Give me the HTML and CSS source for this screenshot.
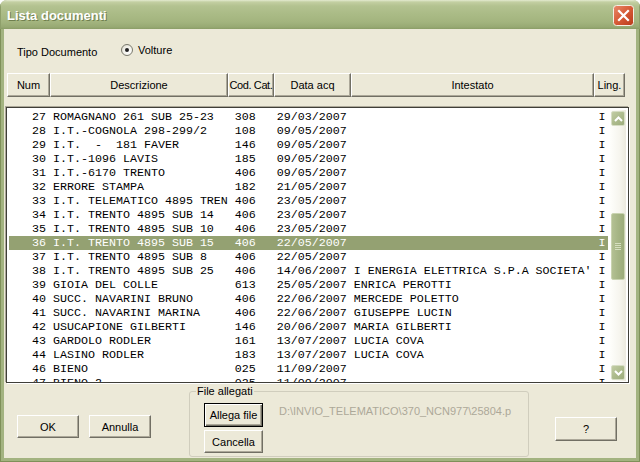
FILE: index.html
```html
<!DOCTYPE html>
<html lang="it">
<head>
<meta charset="utf-8">
<title>Lista documenti</title>
<link rel="stylesheet" href="styles.css">
</head>
<body>
<div class="window">
  <div class="titlebar">
    <span class="title">Lista documenti</span>
    <span class="close-btn">
      <svg width="21" height="21" viewBox="0 0 21 21">
        <defs>
          <linearGradient id="cg" x1="0" y1="0" x2="1" y2="1">
            <stop offset="0" stop-color="#e98a6c"/>
            <stop offset="0.5" stop-color="#d65a36"/>
            <stop offset="1" stop-color="#b9391a"/>
          </linearGradient>
        </defs>
        <rect x="0.5" y="0.5" width="20" height="20" rx="3" fill="url(#cg)" stroke="#f4f0e6"/>
        <path d="M6 6 L15 15 M15 6 L6 15" stroke="#fff" stroke-width="2.2" stroke-linecap="square" fill="none"/>
      </svg>
    </span>
  </div>
  <div class="frame">
    <div class="client">
      <div class="tipo-row">
        <span class="tipo-label">Tipo Documento</span>
        <span class="radio"><span class="radio-circle"><span class="radio-dot"></span></span><span class="radio-text">Volture</span></span>
      </div>

      <div class="header">
        <div class="hcell w-num">Num</div>
        <div class="hcell w-desc">Descrizione</div>
        <div class="hcell w-cod">Cod. Cat.</div>
        <div class="hcell w-date">Data acq</div>
        <div class="hcell w-int">Intestato</div>
        <div class="hcell w-ling">Ling.</div>
      </div>

      <div class="listbox">
        <div class="rows">
          <div class="row"><span>27</span><span>ROMAGNANO 261 SUB 25-23</span><span>308</span><span>29/03/2007</span><span></span><span>I</span></div>
          <div class="row"><span>28</span><span>I.T.-COGNOLA 298-299/2</span><span>108</span><span>09/05/2007</span><span></span><span>I</span></div>
          <div class="row"><span>29</span><span>I.T.  -  181 FAVER</span><span>146</span><span>09/05/2007</span><span></span><span>I</span></div>
          <div class="row"><span>30</span><span>I.T.-1096 LAVIS</span><span>185</span><span>09/05/2007</span><span></span><span>I</span></div>
          <div class="row"><span>31</span><span>I.T.-6170 TRENTO</span><span>406</span><span>09/05/2007</span><span></span><span>I</span></div>
          <div class="row"><span>32</span><span>ERRORE STAMPA</span><span>182</span><span>21/05/2007</span><span></span><span>I</span></div>
          <div class="row"><span>33</span><span>I.T. TELEMATICO 4895 TREN</span><span>406</span><span>23/05/2007</span><span></span><span>I</span></div>
          <div class="row"><span>34</span><span>I.T. TRENTO 4895 SUB 14</span><span>406</span><span>23/05/2007</span><span></span><span>I</span></div>
          <div class="row"><span>35</span><span>I.T. TRENTO 4895 SUB 10</span><span>406</span><span>23/05/2007</span><span></span><span>I</span></div>
          <div class="row sel"><span>36</span><span>I.T. TRENTO 4895 SUB 15</span><span>406</span><span>22/05/2007</span><span></span><span>I</span></div>
          <div class="row"><span>37</span><span>I.T. TRENTO 4895 SUB 8</span><span>406</span><span>22/05/2007</span><span></span><span>I</span></div>
          <div class="row"><span>38</span><span>I.T. TRENTO 4895 SUB 25</span><span>406</span><span>14/06/2007</span><span>I ENERGIA ELETTRICA S.P.A SOCIETA'</span><span>I</span></div>
          <div class="row"><span>39</span><span>GIOIA DEL COLLE</span><span>613</span><span>25/05/2007</span><span>ENRICA PEROTTI</span><span>I</span></div>
          <div class="row"><span>40</span><span>SUCC. NAVARINI BRUNO</span><span>406</span><span>22/06/2007</span><span>MERCEDE POLETTO</span><span>I</span></div>
          <div class="row"><span>41</span><span>SUCC. NAVARINI MARINA</span><span>406</span><span>22/06/2007</span><span>GIUSEPPE LUCIN</span><span>I</span></div>
          <div class="row"><span>42</span><span>USUCAPIONE GILBERTI</span><span>146</span><span>20/06/2007</span><span>MARIA GILBERTI</span><span>I</span></div>
          <div class="row"><span>43</span><span>GARDOLO RODLER</span><span>161</span><span>13/07/2007</span><span>LUCIA COVA</span><span>I</span></div>
          <div class="row"><span>44</span><span>LASINO RODLER</span><span>183</span><span>13/07/2007</span><span>LUCIA COVA</span><span>I</span></div>
          <div class="row"><span>46</span><span>BIENO</span><span>025</span><span>11/09/2007</span><span></span><span>I</span></div>
          <div class="row"><span>47</span><span>BIENO 2</span><span>025</span><span>11/09/2007</span><span></span><span>I</span></div>
        </div>
        <div class="vscroll">
          <div class="sbtn">
            <div class="sbtn-face">
              <svg width="9" height="6" viewBox="0 0 9 6"><path d="M1 5 L4.5 1.5 L8 5" stroke="#fff" stroke-width="2" fill="none"/></svg>
            </div>
          </div>
          <div class="track">
            <div class="thumb">
              <div class="grip"></div><div class="grip"></div><div class="grip"></div><div class="grip"></div>
            </div>
          </div>
          <div class="sbtn">
            <div class="sbtn-face">
              <svg width="9" height="6" viewBox="0 0 9 6"><path d="M1 1 L4.5 4.5 L8 1" stroke="#fff" stroke-width="2" fill="none"/></svg>
            </div>
          </div>
        </div>
      </div>

      <div class="bottom">
        <button class="btn btn-ok">OK</button>
        <button class="btn btn-annulla">Annulla</button>
        <fieldset class="files">
          <legend>File allegati</legend>
          <div class="files-body">
            <div class="files-buttons">
              <button class="btn btn-default btn-allega">Allega file</button>
              <button class="btn btn-cancella">Cancella</button>
            </div>
            <div class="path">D:\INVIO_TELEMATICO\370_NCN977\25804.p</div>
          </div>
        </fieldset>
        <button class="btn btn-help">?</button>
      </div>
    </div>
  </div>
</div>
</body>
</html>
```

FILE: styles.css
```css
* { box-sizing: border-box; }

html, body {
  margin: 0;
  padding: 0;
}

body {
  width: 640px;
  height: 462px;
  overflow: hidden;
  background: #ffffff;
  font-family: "Liberation Sans", Arial, sans-serif;
  font-size: 11px;
  color: #000;
}

.window {
  width: 640px;
  height: 462px;
  display: flex;
  flex-direction: column;
  border-radius: 7px 7px 0 0;
  overflow: hidden;
  background: #a1b17e;
}

.titlebar {
  height: 29px;
  flex: none;
  display: flex;
  align-items: center;
  justify-content: space-between;
  padding: 0 6px 0 7px;
  background: linear-gradient(to bottom,
    #e4ead0 0px, #c3cfa2 2px, #b3c290 6px, #aabb86 14px,
    #a3b47e 22px, #97a973 27px, #8a9c66 29px);
  box-shadow: inset 1px 0 #8e9f6a, inset -1px 0 #8e9f6a;
}

.title {
  font-weight: bold;
  font-size: 13px;
  color: #fff;
  text-shadow: 1px 1px 0 #6f7f4e;
  letter-spacing: 0;
  margin-top: 1px;
}

.close-btn {
  display: flex;
  width: 21px;
  height: 21px;
  margin-top: 1px;
}

.frame {
  flex: 1;
  padding: 0 4px 4px;
  background: #a3b380;
  box-shadow: inset 1px 0 #7f9059, inset -1px 0 #7f9059, inset 0 -1px #7f9059;
}

.client {
  height: 100%;
  background: #ece9d8;
  display: flex;
  flex-direction: column;
}

/* Tipo documento row */
.tipo-row {
  margin-top: 14px;
  height: 16px;
  padding-left: 13px;
  display: flex;
  align-items: flex-start;
}

.tipo-label {
  width: 104px;
  line-height: 16px;
  margin-top: 1px;
}

.radio {
  display: flex;
  align-items: center;
  height: 16px;
  margin-top: -1px;
}

.radio-circle {
  width: 12px;
  height: 12px;
  border-radius: 50%;
  border: 1px solid #7a7a6e;
  background: radial-gradient(circle at 65% 65%, #ffffff 0, #f2f1ea 50%, #d6d3c4 100%);
  display: flex;
  align-items: center;
  justify-content: center;
}

.radio-dot {
  width: 4px;
  height: 4px;
  border-radius: 50%;
  background: #222;
}

.radio-text {
  margin-left: 5px;
  line-height: 16px;
}

/* Column header */
.header {
  margin: 14px 0 0 3px;
  height: 24px;
  display: flex;
}

.hcell {
  height: 24px;
  display: flex;
  align-items: center;
  justify-content: center;
  white-space: nowrap;
  overflow: hidden;
  background: #ece9d8;
  border: 1px solid;
  border-color: #ffffff #716f64 #716f64 #ffffff;
  box-shadow: inset -1px -1px 0 #aca899;
}

.w-num { width: 43px; }
.w-desc { width: 178px; }
.w-cod { width: 46px; letter-spacing: -0.4px; }
.w-date { width: 77px; }
.w-int { width: 243px; }
.w-ling { width: 31px; }

/* List */
.listbox {
  margin: 10px 0 0 2px;
  width: 623px;
  height: 276px;
  display: flex;
  align-items: flex-start;
  padding: 2px 2px 0 2px;
  background: #ffffff;
  border: 1px solid #3f3e38;
  box-shadow: -1px -1px 0 #aca899, 1px 1px 0 #ffffff;
}

.rows {
  width: 599px;
  height: 272px;
  overflow: hidden;
  font-family: "Liberation Mono", "Courier New", monospace;
  font-size: 11.667px;
  color: #000;
}

.row {
  display: grid;
  grid-template-columns: 3ch 26ch 6ch 11ch 35ch 1ch;
  height: 14px;
  line-height: 14px;
  padding-left: 23px;
  white-space: pre;
}

.row.sel {
  background: #94a172;
  color: #ffffff;
}

/* Scrollbar */
.vscroll {
  width: 16px;
  height: 271px;
  margin-left: 2px;
  display: flex;
  flex-direction: column;
  background: linear-gradient(to right, #fefefb 0, #f6f5ee 60%, #ebe9de 100%);
}

.sbtn {
  height: 17px;
  padding: 1px;
  flex: none;
}

.sbtn-face {
  height: 15px;
  border: 1px solid #d6ddc4;
  border-radius: 2px;
  background: linear-gradient(135deg, #c2cda4 0, #adbb8d 50%, #9dac7c 100%);
  display: flex;
  align-items: center;
  justify-content: center;
}

.track {
  flex: 1;
  padding: 0 1px;
}

.thumb {
  margin-top: 86px;
  height: 67px;
  border: 1px solid #c9d3b0;
  border-radius: 2px;
  background: linear-gradient(to right, #b3c093 0, #a6b585 50%, #9cab7a 100%);
  display: flex;
  flex-direction: column;
  align-items: center;
  justify-content: center;
  gap: 1px;
}

.grip {
  width: 6px;
  height: 1px;
  background: #d6dfc0;
}

/* Bottom area */
.bottom {
  height: 75px;
  display: flex;
  align-items: flex-start;
}

.btn {
  font-family: "Liberation Sans", Arial, sans-serif;
  font-size: 11px;
  color: #000;
  background: #ece9d8;
  border: 1px solid;
  border-color: #ffffff #716f64 #716f64 #ffffff;
  box-shadow: inset -1px -1px 0 #aca899;
  padding: 0;
  margin: 0;
  cursor: default;
}

.btn-default {
  border: 1px solid #000;
  box-shadow: inset 1px 1px 0 #ffffff, inset -1px -1px 0 #716f64, inset -2px -2px 0 #aca899;
}

.btn-ok {
  width: 62px;
  height: 23px;
  margin: 32px 0 0 13px;
}

.btn-annulla {
  width: 62px;
  height: 23px;
  margin: 32px 0 0 10px;
}

.files {
  margin: 2px 0 0 38px;
  width: 340px;
  height: 72px;
  min-width: 0;
  border: 1px solid #d0cdbd;
  border-radius: 3px;
  padding: 0 0 0 6px;
}

.files legend {
  padding: 0 1px;
  font-size: 11px;
  line-height: 13px;
}

.files-body {
  display: flex;
  align-items: flex-start;
  margin-top: 5px;
}

.files-buttons {
  margin-left: 8px;
  display: flex;
  flex-direction: column;
  gap: 3px;
}

.btn-allega {
  width: 59px;
  height: 24px;
}

.btn-cancella {
  width: 59px;
  height: 23px;
}

.path {
  margin: 2px 0 0 16px;
  width: 236px;
  line-height: 13px;
  white-space: nowrap;
  overflow: hidden;
  color: #aca899;
}

.btn-help {
  width: 62px;
  height: 24px;
  margin: 34px 0 0 26px;
}
```
